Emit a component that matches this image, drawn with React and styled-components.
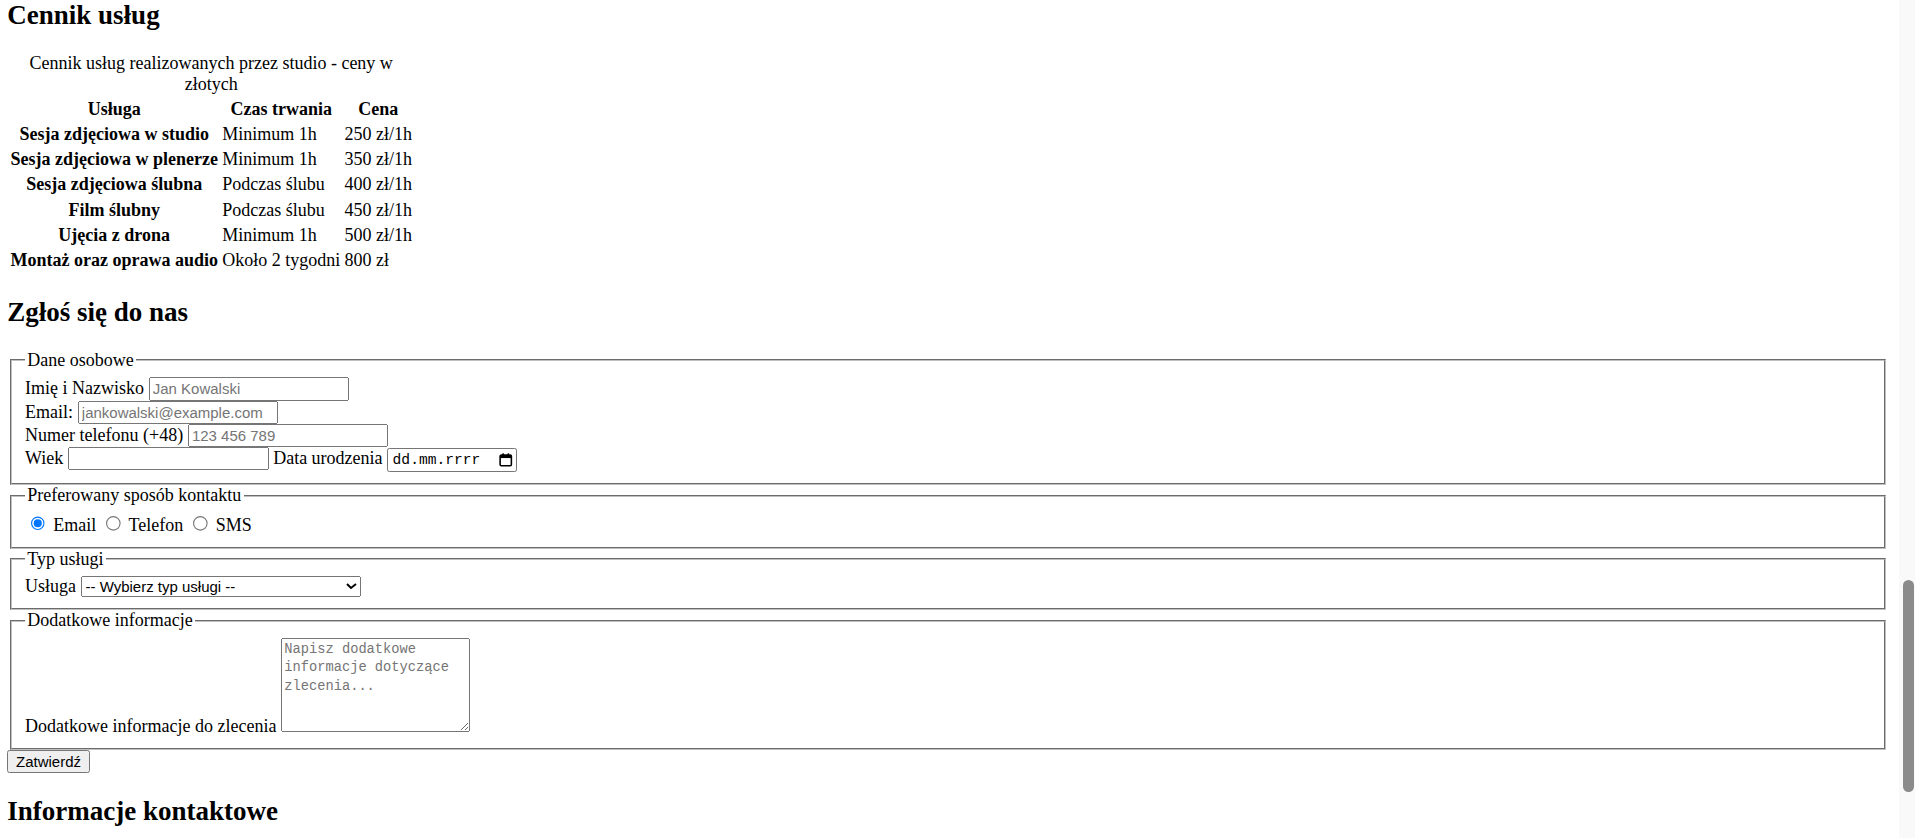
import React from "react";
import styled, { createGlobalStyle } from "styled-components";

const prices = [
  { service: "Sesja zdjęciowa w studio", time: "Minimum 1h", price: "250 zł/1h" },
  { service: "Sesja zdjęciowa w plenerze", time: "Minimum 1h", price: "350 zł/1h" },
  { service: "Sesja zdjęciowa ślubna", time: "Podczas ślubu", price: "400 zł/1h" },
  { service: "Film ślubny", time: "Podczas ślubu", price: "450 zł/1h" },
  { service: "Ujęcia z drona", time: "Minimum 1h", price: "500 zł/1h" },
  { service: "Montaż oraz oprawa audio", time: "Około 2 tygodni", price: "800 zł" }
];

// page is shown scrolled down, so the thumb sits low in the track
const scroll = { offset: 580, size: 212 };

const App = () => (
  <Viewport>
    <GlobalStyle />
    <Content>
      <Page>
        <SectionTitle $first>Cennik usług</SectionTitle>
        <PriceTable>
          <caption>Cennik usług realizowanych przez studio - ceny w złotych</caption>
          <thead>
            <tr>
              <th>Usługa</th>
              <th>Czas trwania</th>
              <th>Cena</th>
            </tr>
          </thead>
          <tbody>
            {prices.map((row) => (
              <tr key={row.service}>
                <th>{row.service}</th>
                <td>{row.time}</td>
                <td>{row.price}</td>
              </tr>
            ))}
          </tbody>
        </PriceTable>

        <SectionTitle>Zgłoś się do nas</SectionTitle>
        <form onSubmit={(e) => e.preventDefault()}>
          <Group>
            <Legend>Dane osobowe</Legend>
            <label>
              Imię i Nazwisko <TextField type="text" placeholder="Jan Kowalski" />
            </label>
            <br />
            <label>
              Email: <TextField type="email" placeholder="jankowalski@example.com" />
            </label>
            <br />
            <label>
              Numer telefonu (+48) <TextField type="tel" placeholder="123 456 789" />
            </label>
            <br />
            <label>
              Wiek <TextField type="number" />
            </label>{" "}
            <label>
              Data urodzenia{" "}
              <DateBox>
                <span>dd.mm.rrrr</span>
                <svg width="12" height="12" viewBox="0 0 12 12">
                  <rect x="1" y="1.9" width="10" height="9.4" rx="1" fill="none" stroke="#000" strokeWidth="1.4" />
                  <rect x="1" y="1.9" width="10" height="2.6" fill="#000" />
                  <rect x="3" y="0.3" width="1.4" height="2" fill="#000" />
                  <rect x="7.6" y="0.3" width="1.4" height="2" fill="#000" />
                </svg>
              </DateBox>
            </label>
          </Group>

          <Group>
            <Legend>Preferowany sposób kontaktu</Legend>
            <label>
              <input type="radio" name="contact" defaultChecked /> Email
            </label>{" "}
            <label>
              <input type="radio" name="contact" /> Telefon
            </label>{" "}
            <label>
              <input type="radio" name="contact" /> SMS
            </label>
          </Group>

          <Group>
            <Legend>Typ usługi</Legend>
            <label>
              Usługa{" "}
              <Choice defaultValue="">
                <option value="">-- Wybierz typ usługi --</option>
              </Choice>
            </label>
          </Group>

          <Group>
            <Legend>Dodatkowe informacje</Legend>
            <label>
              Dodatkowe informacje do zlecenia{" "}
              <Notes placeholder="Napisz dodatkowe informacje dotyczące zlecenia..." />
            </label>
          </Group>
          <SubmitButton type="submit">Zatwierdź</SubmitButton>
        </form>

        <SectionTitle>Informacje kontaktowe</SectionTitle>
      </Page>
    </Content>
    <ScrollTrack>
      <ScrollThumb $offset={scroll.offset} $size={scroll.size} />
    </ScrollTrack>
  </Viewport>
);

export default App;

// Global
const GlobalStyle = createGlobalStyle`
  html, body {
    margin: 0;
    padding: 0;
    background: #fff;
    overflow: hidden;
  }
`;

// Window with the fake scrollbar column
const Viewport = styled.div`
  display: flex;
  height: 100vh;
  overflow: hidden;
`;

const Content = styled.main`
  flex: 1;
  min-width: 0;
  overflow: hidden;
`;

// the screenshot was taken at 112.5% scale
const Page = styled.div`
  zoom: 1.125;
  padding: 0 9.5px 0 6.5px;
  font-family: "Liberation Serif", "Times New Roman", serif;
  font-size: 16px;
  color: #000;
`;

const SectionTitle = styled.h2`
  font-size: 1.5em;
  font-weight: bold;
  margin: ${(p) => (p.$first ? "0" : "0.83em")} 0 0.83em;
`;

// Price table
const PriceTable = styled.table`
  border-spacing: 2px;
  caption {
    text-align: center;
  }
  th,
  td {
    padding: 1px;
  }
  th {
    font-weight: bold;
    text-align: center;
  }
  td {
    text-align: left;
  }
`;

// Form
const Group = styled.fieldset`
  margin: 0 2px;
  padding: 0.35em 0.75em 0.625em;
  border: 2px groove rgb(192, 192, 192);
`;

const Legend = styled.legend`
  padding: 0 2px;
`;

const TextField = styled.input`
  box-sizing: border-box;
  width: 178.5px;
  font-family: "Liberation Sans", Arial, sans-serif;
  font-size: 13.333px;
  &::placeholder {
    color: #757575;
  }
  &::-webkit-inner-spin-button,
  &::-webkit-outer-spin-button {
    -webkit-appearance: none;
    margin: 0;
  }
`;

const DateBox = styled.span`
  display: inline-flex;
  align-items: center;
  justify-content: space-between;
  box-sizing: border-box;
  width: 115.6px;
  height: 21.3px;
  padding: 0 3px 0 4px;
  border: 1px solid #767676;
  border-radius: 2px;
  font-family: "Liberation Mono", monospace;
  font-size: 13px;
  svg {
    display: block;
  }
`;

const Choice = styled.select`
  box-sizing: border-box;
  width: 249px;
  font-family: "Liberation Sans", Arial, sans-serif;
  font-size: 13.333px;
  color: #000;
`;

const Notes = styled.textarea`
  box-sizing: border-box;
  width: 168px;
  height: 83.6px;
  padding: 2px;
  font-family: "Liberation Mono", monospace;
  font-size: 12.22px;
  line-height: 16.3px;
  &::placeholder {
    color: #757575;
  }
`;

const SubmitButton = styled.button`
  font-family: "Liberation Sans", Arial, sans-serif;
  font-size: 13.333px;
`;

// Scrollbar
const ScrollTrack = styled.div`
  flex: 0 0 16px;
  box-sizing: border-box;
  padding-left: 4px;
  background: #f9f9f9;
`;

const ScrollThumb = styled.div`
  width: 11px;
  height: ${(p) => p.$size}px;
  margin-top: ${(p) => p.$offset}px;
  border-radius: 6px;
  background: #8b8b8b;
`;
